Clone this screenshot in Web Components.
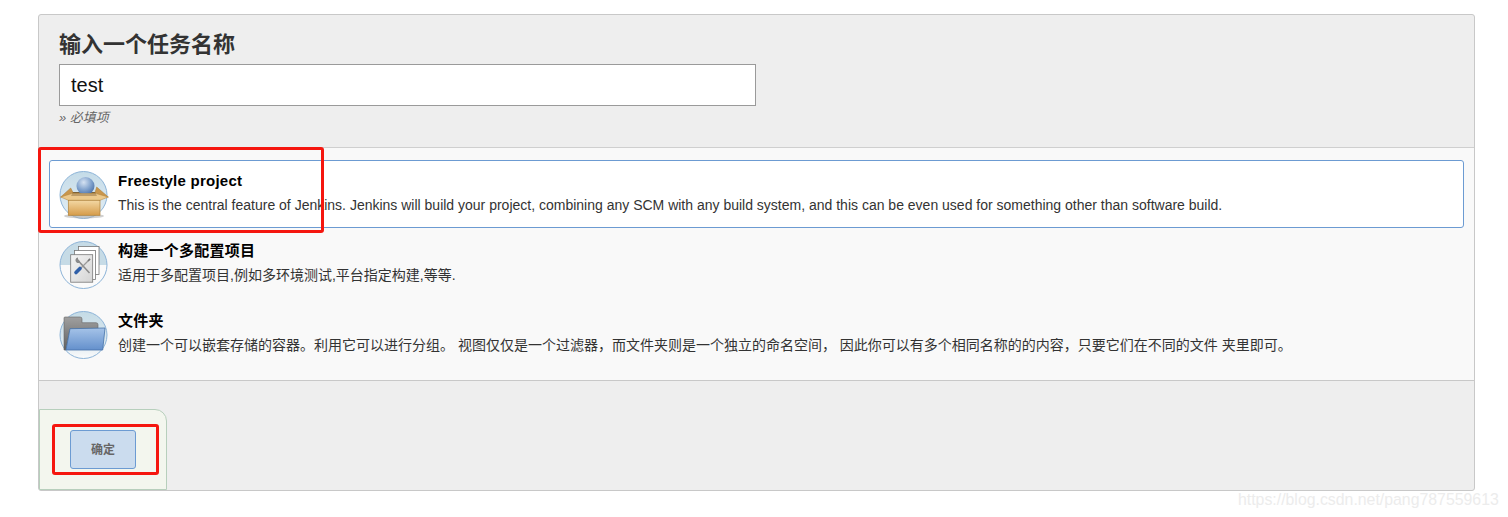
<!DOCTYPE html>
<html lang="zh">
<head>
<meta charset="utf-8">
<title>新建任务</title>
<style>
html,body{margin:0;height:517px;overflow:hidden;background:#fff;font-family:"Liberation Sans","Noto Sans CJK SC",sans-serif}
</style>
</head>
<body>
<job-page>
  <name-field slot="head" label="输入一个任务名称" value="test" hint="» 必填项"></name-field>

  <job-item slot="list" selected name="Freestyle project" desc="This is the central feature of Jenkins. Jenkins will build your project, combining any SCM with any build system, and this can be even used for something other than software build.">
    <svg slot="icon" width="50" height="50" viewBox="0 0 50 50">
      <defs>
        <linearGradient id="bg1" x1="0" y1="0" x2="0" y2="1"><stop offset="0" stop-color="#c4dbe8"/><stop offset="1" stop-color="#e4eef4"/></linearGradient>
        <radialGradient id="ball" cx=".4" cy=".3" r=".8"><stop offset="0" stop-color="#d5e2f2"/><stop offset=".55" stop-color="#7d9fcb"/><stop offset="1" stop-color="#3f659e"/></radialGradient>
        <linearGradient id="box" x1="0" y1="0" x2="0" y2="1"><stop offset="0" stop-color="#f3d8a4"/><stop offset="1" stop-color="#d69c4a"/></linearGradient>
      </defs>
      <circle cx="24.500" cy="25" r="23.5" fill="url(#bg1)" stroke="#8db4d8" stroke-width="1"/>
      <ellipse cx="25" cy="46" rx="20" ry="2.5" fill="#aaa" opacity=".55"/>
      <path d="M13 22h24v6H13z" fill="#7d6238"/>
      <circle cx="26.500" cy="16" r="9" fill="url(#ball)"/>
      <path d="M11.700 18L1.700 27h5L14 22.500z" fill="#c9964c" stroke="#a97c38" stroke-width=".5"/>
      <path d="M37.700 17l11.600 10h-5.300L36 22.500z" fill="#c9964c" stroke="#a97c38" stroke-width=".5"/>
      <path d="M1.700 27l11.300-3.500h24L49.300 27 41 30.300H9.300z" fill="#ecc98c" stroke="#b08238" stroke-width=".5"/>
      <path d="M13 24.500h24l1 1H12z" fill="#8f7142"/>
      <rect x="9.300" y="30.300" width="31.700" height="15" fill="url(#box)" stroke="#b08238" stroke-width=".7"/>
    </svg>
  </job-item>

  <job-item slot="list" name="构建一个多配置项目" desc="适用于多配置项目,例如多环境测试,平台指定构建,等等.">
    <svg slot="icon" width="50" height="50" viewBox="0 0 50 50">
      <defs>
        <linearGradient id="bg2" x1="0" y1="0" x2="0" y2="1"><stop offset="0" stop-color="#c6dbe6"/><stop offset=".5" stop-color="#c6dbe6"/><stop offset=".51" stop-color="#fafafa"/><stop offset="1" stop-color="#fafafa"/></linearGradient>
        <linearGradient id="sheet" x1="0" y1="0" x2="1" y2="1"><stop offset="0" stop-color="#f4f4f4"/><stop offset="1" stop-color="#d4d4d4"/></linearGradient>
      </defs>
      <circle cx="24.500" cy="25" r="23.5" fill="url(#bg2)" stroke="#8db4d8" stroke-width="1"/>
      <rect x="19.500" y="6.500" width="20.500" height="28" fill="#fff" stroke="#777" stroke-width=".8"/>
      <rect x="15.500" y="10.500" width="21" height="29" fill="#fff" stroke="#777" stroke-width=".8"/>
      <rect x="11.700" y="14.700" width="22" height="27.500" fill="url(#sheet)" stroke="#777" stroke-width=".8"/>
      <path d="M19 20.500l11.500 12.500" stroke="#8a8a8a" stroke-width="1.500"/>
      <path d="M16.500 19.500a3 3 0 0 0 3.500 3.500l1-1.500-2-2.500v-1.500a3 3 0 0 0-2.500 2z" fill="#8a8a8a"/>
      <path d="M30 20l-9 9" stroke="#9a9a9a" stroke-width="1.300"/>
      <path d="M28.500 20.500l2-2.200 1.200 1.200-2.200 2z" fill="#777"/>
      <path d="M21 28.500l-4 4" stroke="#2f5fa8" stroke-width="3.600" stroke-linecap="round"/>
    </svg>
  </job-item>

  <job-item slot="list" name="文件夹" desc="创建一个可以嵌套存储的容器。利用它可以进行分组。 视图仅仅是一个过滤器，而文件夹则是一个独立的命名空间， 因此你可以有多个相同名称的的内容，只要它们在不同的文件 夹里即可。">
    <svg slot="icon" width="50" height="50" viewBox="0 0 50 50">
      <defs>
        <linearGradient id="bg3" x1="0" y1="0" x2="0" y2="1"><stop offset="0" stop-color="#c4dbe6"/><stop offset=".7" stop-color="#dfeaf0"/><stop offset="1" stop-color="#fbfbfb"/></linearGradient>
        <linearGradient id="back" x1="0" y1="0" x2="0" y2="1"><stop offset="0" stop-color="#a0a0a0"/><stop offset="1" stop-color="#5f5f5f"/></linearGradient>
        <linearGradient id="front" x1="0" y1="0" x2="0" y2="1"><stop offset="0" stop-color="#a5c3e8"/><stop offset="1" stop-color="#6490cc"/></linearGradient>
      </defs>
      <circle cx="24.500" cy="25" r="23.5" fill="url(#bg3)" stroke="#8db4d8" stroke-width="1"/>
      <path d="M5 8q0-1 1-1h15q2 0 2 2v3.700h14q2 0 2 2V19H11l-4 21H5z" fill="url(#back)" stroke="#666" stroke-width=".6"/>
      <path d="M11 18.700L46 18l-2.300 22H7z" fill="url(#front)" stroke="#4672a8" stroke-width=".8"/>
    </svg>
  </job-item>

  <ok-bar slot="foot" label="确定"></ok-bar>
</job-page>

<mark-box style="left:38px;top:147px;width:286px;height:86px"></mark-box>
<mark-box style="left:52px;top:424px;width:107px;height:51px"></mark-box>
<wm-text>https://blog.csdn.net/pang787559613</wm-text>

<script>
// outer grey panel with the three bands
class JobPage extends HTMLElement{
  constructor(){
    super();
    this.attachShadow({mode:'open'});
    this.shadowRoot.innerHTML=`
    <style>
      :host{display:block;box-sizing:border-box;width:1437px;height:477px;margin:14px 0 0 38px;
        border:1px solid #c8c8c8;border-radius:3px;background:#eeeeee}
      .head{box-sizing:border-box;height:133px;padding:16px 20px 0;border-bottom:1px solid #cfcfcf}
      .list{box-sizing:border-box;height:233px;padding:12px 10px 0;background:#f9f9f9;border-bottom:1px solid #c8c8c8;
        display:flex;flex-direction:column;gap:2px}
      .foot{padding-top:28px}
    </style>
    <div class="head"><slot name="head"></slot></div>
    <div class="list"><slot name="list"></slot></div>
    <div class="foot"><slot name="foot"></slot></div>`;
  }
}
class NameField extends HTMLElement{
  constructor(){
    super();
    this.attachShadow({mode:'open'});
  }
  connectedCallback(){
    this.shadowRoot.innerHTML=`
    <style>
      :host{display:block}
      h3{margin:0;font-size:22px;line-height:28px;height:33px;font-weight:bold;color:#333}
      .box{box-sizing:border-box;width:697px;height:42px;padding:0 11px;border:1px solid #9a9a9a;background:#fff;
        font-size:20px;line-height:40px;color:#111}
      .hint{margin-top:3px;font-size:13px;line-height:17px;font-style:italic;color:#666}
    </style>
    <h3>${this.getAttribute('label')}</h3>
    <div class="box">${this.getAttribute('value')}</div>
    <div class="hint">${this.getAttribute('hint')}</div>`;
  }
}
class JobItem extends HTMLElement{
  constructor(){
    super();
    this.attachShadow({mode:'open'});
  }
  connectedCallback(){
    this.shadowRoot.innerHTML=`
    <style>
      :host{display:flex;box-sizing:border-box;height:68px;padding:0 9px;border:1px solid transparent;border-radius:3px;align-items:flex-start}
      :host([selected]){border-color:#6c9bd2;background:#fff}
      .ic{width:50px;height:50px;margin-top:9px;flex:none}
      .tx{margin-left:9px;padding-top:10px}
      .t{font-size:15px;line-height:20px;font-weight:bold;color:#000;letter-spacing:.25px}
      .d{margin-top:4px;font-size:14px;line-height:20px;color:#333;white-space:nowrap}
      ::slotted(svg){display:block}
    </style>
    <div class="ic"><slot name="icon"></slot></div>
    <div class="tx">
      <div class="t">${this.getAttribute('name')}</div>
      <div class="d">${this.getAttribute('desc')}</div>
    </div>`;
  }
}
class OkBar extends HTMLElement{
  constructor(){
    super();
    this.attachShadow({mode:'open'});
  }
  connectedCallback(){
    this.shadowRoot.innerHTML=`
    <style>
      :host{display:block;box-sizing:border-box;width:128px;height:81px;padding:20px 0 0 30px;
        background:#f3f6ee;border:1px solid #b7cfbc;border-radius:0 12px 0 0}
      .b{box-sizing:border-box;width:66px;height:39px;padding-bottom:2px;border:1px solid #6c9bd2;border-radius:3px;background:#cbdcee;
        display:flex;align-items:center;justify-content:center;font-size:12px;font-weight:bold;color:#666}
    </style>
    <div class="b">${this.getAttribute('label')}</div>`;
  }
}
// red annotation drawn over the screenshot
class MarkBox extends HTMLElement{
  constructor(){
    super();
    this.attachShadow({mode:'open'});
    this.shadowRoot.innerHTML=`
    <style>
      :host{position:absolute;display:block;box-sizing:border-box;border:3px solid #f5160f;border-radius:3px}
    </style>`;
  }
}
class WmText extends HTMLElement{
  constructor(){
    super();
    this.attachShadow({mode:'open'});
    this.shadowRoot.innerHTML=`
    <style>
      :host{position:absolute;left:1238px;top:490px;display:block;font-size:15.85px;line-height:19px;color:#ececec;white-space:nowrap}
    </style>
    <slot></slot>`;
  }
}
customElements.define('job-page',JobPage);
customElements.define('name-field',NameField);
customElements.define('job-item',JobItem);
customElements.define('ok-bar',OkBar);
customElements.define('mark-box',MarkBox);
customElements.define('wm-text',WmText);
</script>
</body>
</html>
